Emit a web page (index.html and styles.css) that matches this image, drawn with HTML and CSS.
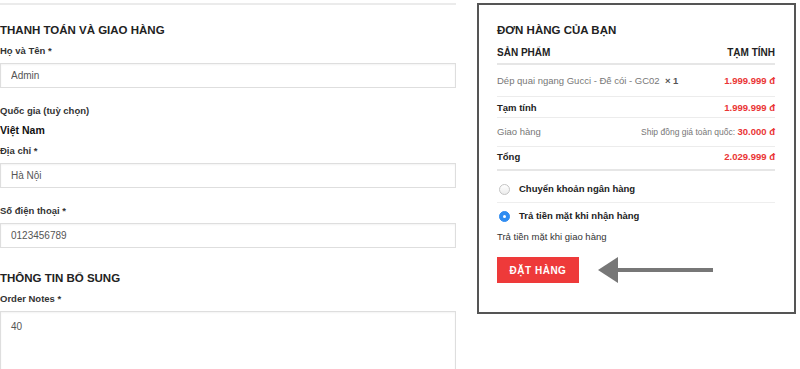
FILE: index.html
```html
<!DOCTYPE html>
<html lang="vi">
<head>
  <meta charset="UTF-8" />
  <meta name="viewport" content="width=device-width, initial-scale=1.0" />
  <title>Thanh toán</title>
  <link rel="stylesheet" href="styles.css">
</head>
<body>
  <div class="page">
    <!-- Thông tin thanh toán -->
    <div class="billing">
      <h3 class="section-title">THANH TOÁN VÀ GIAO HÀNG</h3>

      <div class="field">
        <label for="fullname">Họ và Tên *</label>
        <input type="text" id="fullname" value="Admin" />
      </div>

      <div class="field country">
        <label>Quốc gia (tuỳ chọn)</label>
        <div class="country-value">Việt Nam</div>
      </div>

      <div class="field">
        <label for="address">Địa chỉ *</label>
        <input type="text" id="address" value="Hà Nội" />
      </div>

      <div class="field">
        <label for="phone">Số điện thoại *</label>
        <input type="tel" id="phone" value="0123456789" />
      </div>

      <h3 class="section-title extra">THÔNG TIN BỔ SUNG</h3>
      <div class="field">
        <label for="notes">Order Notes *</label>
        <textarea id="notes">40</textarea>
      </div>
    </div>

    <!-- Đơn hàng -->
    <div class="order-box">
      <h3 class="section-title">ĐƠN HÀNG CỦA BẠN</h3>
      <div class="order-list">
        <div class="order-row head">
          <span>Sản phẩm</span>
          <span>Tạm tính</span>
        </div>
        <div class="order-row item">
          <span class="muted">Dép quai ngang Gucci - Đế cói - GC02 &nbsp;<strong>× 1</strong></span>
          <span class="price">1.999.999 đ</span>
        </div>
        <div class="order-row sub">
          <span class="bold">Tạm tính</span>
          <span class="price">1.999.999 đ</span>
        </div>
        <div class="order-row ship">
          <span class="muted">Giao hàng</span>
          <span class="muted ship-note">Ship đồng giá toàn quốc: <span class="price">30.000 đ</span></span>
        </div>
        <div class="order-row total">
          <span class="bold">Tổng</span>
          <span class="price">2.029.999 đ</span>
        </div>
      </div>

      <div class="pay-list">
        <div class="pay-option first">
          <span class="radio"></span>
          Chuyển khoản ngân hàng
        </div>
        <div class="pay-option">
          <span class="radio checked"></span>
          Trả tiền mặt khi nhận hàng
        </div>
        <div class="pay-desc">Trả tiền mặt khi giao hàng</div>
      </div>

      <div class="actions">
        <button class="btn-order">ĐẶT HÀNG</button>
        <svg class="arrow" width="115" height="26" viewBox="0 0 115 26">
          <polygon points="0,13 20,0 20,26" fill="#777" />
          <rect x="19" y="11" width="96" height="4" fill="#777" />
        </svg>
      </div>
    </div>
  </div>
</body>
</html>
```

FILE: styles.css
```css
* { box-sizing: border-box; }
body {
  margin: 0;
  font-family: "Liberation Sans", Arial, sans-serif;
  color: #333;
  background: #fff;
}
.page {
  display: flex;
  align-items: flex-start;
  gap: 21px;
}
.billing {
  width: 456px;
  flex-shrink: 0;
  margin-top: 3px;
  border-top: 2px solid #ebebeb;
}
.section-title {
  margin: 17px 0 6px;
  font-size: 11.5px;
  line-height: 16px;
  font-weight: bold;
  color: #222;
}
.section-title.extra {
  margin-top: 22px;
}
.field {
  margin-bottom: 16px;
}
.field.country {
  margin-bottom: 7px;
}
label {
  display: block;
  font-size: 9.5px;
  line-height: 14px;
  font-weight: bold;
  color: #333;
  margin-bottom: 5px;
}
.country-value {
  font-size: 10.5px;
  line-height: 14px;
  font-weight: bold;
  color: #111;
}
input, textarea {
  display: block;
  width: 100%;
  height: 25px;
  padding: 0 10px;
  border: 1px solid #dedede;
  border-radius: 0;
  box-shadow: inset 0 1px 2px rgba(0, 0, 0, 0.05);
  font-family: "Liberation Sans", Arial, sans-serif;
  font-size: 10px;
  color: #555;
  outline: none;
}
textarea {
  height: 80px;
  padding: 9px 10px;
  resize: none;
}

/* Khung đơn hàng */
.order-box {
  width: 319px;
  flex-shrink: 0;
  margin-top: 3px;
  border: 2px solid #555;
  padding: 17px 19px 29px 18px;
}
.order-box .section-title {
  margin: 0 0 8px;
}
.order-list {
  font-size: 9.5px;
  line-height: 14px;
}
.order-row {
  display: flex;
  justify-content: space-between;
  align-items: baseline;
  white-space: nowrap;
  border-bottom: 1px solid #ececec;
}
.order-row.head {
  padding: 0 0 3px;
  border-bottom: 2px solid #e6e6e6;
  text-transform: uppercase;
  font-size: 10px;
  font-weight: bold;
  color: #222;
}
.order-row.item { padding: 9px 0 8px; }
.order-row.sub { padding: 4px 0 2px; }
.order-row.ship { padding: 7px 0 7px; }
.order-row.total {
  padding: 3px 0 5px;
  border-bottom: 2px solid #e6e6e6;
}
.muted { color: #777; }
.muted strong { color: #555; }
.bold { font-weight: bold; color: #222; }
.price {
  font-weight: bold;
  color: #ea3535;
}
.ship-note {
  font-size: 8.5px;
}
.ship-note .price {
  font-size: 9.5px;
}

.pay-list {
  margin-top: 9px;
}
.pay-option {
  display: flex;
  align-items: center;
  gap: 9px;
  padding-left: 2px;
  font-size: 9.5px;
  line-height: 18px;
  font-weight: bold;
  color: #222;
}
.pay-option.first {
  padding-bottom: 4px;
  border-bottom: 1px solid #eee;
  margin-bottom: 4px;
}
.radio {
  position: relative;
  width: 11px;
  height: 11px;
  border-radius: 50%;
  border: 1px solid #c4c4c4;
  background: linear-gradient(#fff, #ececec);
}
.radio.checked {
  border-color: #2f8cf1;
  background: #2f8cf1;
}
.radio.checked::after {
  content: "";
  position: absolute;
  top: 3px;
  left: 3px;
  width: 3px;
  height: 3px;
  border-radius: 50%;
  background: #fff;
}
.pay-desc {
  margin-top: 5px;
  font-size: 9.5px;
  line-height: 14px;
  color: #333;
}
.actions {
  display: flex;
  align-items: center;
  gap: 19px;
  margin-top: 13px;
}
.btn-order {
  width: 82px;
  height: 26px;
  border: none;
  background: #ee3a3a;
  color: #fff;
  font-family: "Liberation Sans", Arial, sans-serif;
  font-size: 10px;
  font-weight: bold;
  letter-spacing: 0.5px;
  cursor: pointer;
}
.arrow {
  display: block;
}
```
